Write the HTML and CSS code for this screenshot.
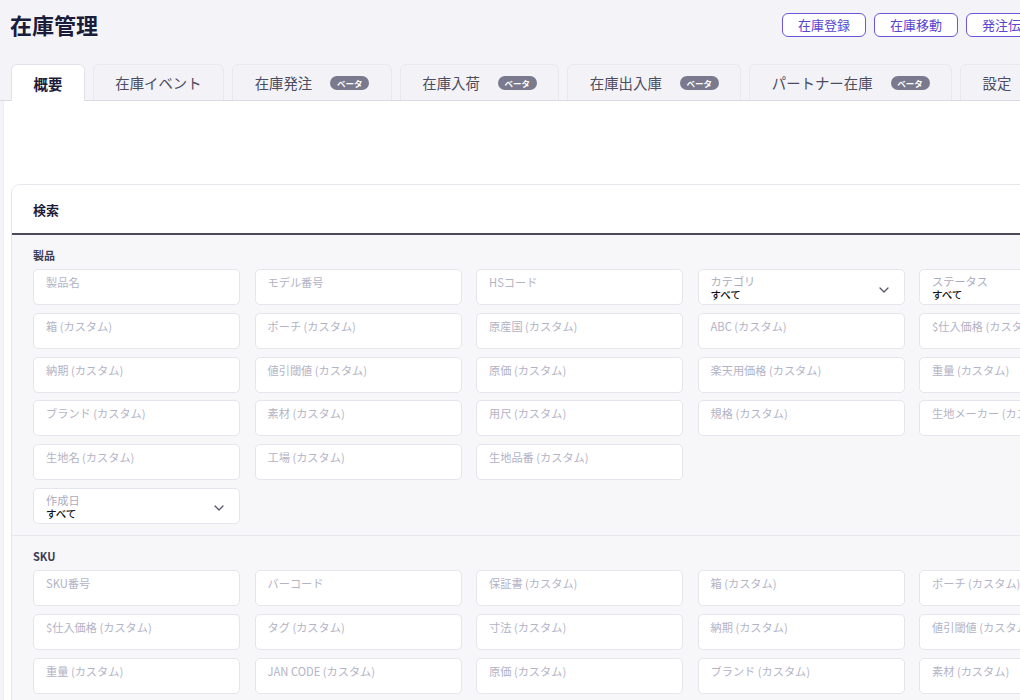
FILE: index.html
```html
<!DOCTYPE html>
<html lang="ja">
<head>
<meta charset="utf-8">
<title>在庫管理</title>
<link rel="stylesheet" href="styles.css">
</head>
<body>
<div class="app">
  <header class="topbar">
    <h1 class="title">在庫管理</h1>
    <div class="actions">
      <button class="btn">在庫登録</button>
      <button class="btn">在庫移動</button>
      <button class="btn">発注伝票</button>
    </div>
  </header>

  <nav class="tabs">
    <div class="tab active">概要</div>
    <div class="tab">在庫イベント</div>
    <div class="tab">在庫発注<span class="badge">ベータ</span></div>
    <div class="tab">在庫入荷<span class="badge">ベータ</span></div>
    <div class="tab">在庫出入庫<span class="badge">ベータ</span></div>
    <div class="tab">パートナー在庫<span class="badge">ベータ</span></div>
    <div class="tab">設定</div>
  </nav>

  <main class="content">
    <section class="card">
      <div class="card-head">検索</div>
      <div class="card-body">
        <div class="group">
          <div class="group-label">製品</div>
          <div class="grid">
            <div class="field">製品名</div>
            <div class="field">モデル番号</div>
            <div class="field">HSコード</div>
            <div class="field select"><div class="sel-text"><span class="sel-label">カテゴリ</span><span class="sel-value">すべて</span></div><svg class="chev" width="10" height="6" viewBox="0 0 10 6"><path d="M1 1l4 4 4-4" fill="none" stroke="#55556a" stroke-width="1.3" stroke-linecap="round" stroke-linejoin="round"/></svg></div>
            <div class="field select"><div class="sel-text"><span class="sel-label">ステータス</span><span class="sel-value">すべて</span></div><svg class="chev" width="10" height="6" viewBox="0 0 10 6"><path d="M1 1l4 4 4-4" fill="none" stroke="#55556a" stroke-width="1.3" stroke-linecap="round" stroke-linejoin="round"/></svg></div>

            <div class="field">箱 (カスタム)</div>
            <div class="field">ポーチ (カスタム)</div>
            <div class="field">原産国 (カスタム)</div>
            <div class="field">ABC (カスタム)</div>
            <div class="field">$仕入価格 (カスタム)</div>

            <div class="field">納期 (カスタム)</div>
            <div class="field">値引閾値 (カスタム)</div>
            <div class="field">原価 (カスタム)</div>
            <div class="field">楽天用価格 (カスタム)</div>
            <div class="field">重量 (カスタム)</div>

            <div class="field">ブランド (カスタム)</div>
            <div class="field">素材 (カスタム)</div>
            <div class="field">用尺 (カスタム)</div>
            <div class="field">規格 (カスタム)</div>
            <div class="field">生地メーカー (カスタム)</div>

            <div class="field">生地名 (カスタム)</div>
            <div class="field">工場 (カスタム)</div>
            <div class="field">生地品番 (カスタム)</div>
          </div>
          <div class="grid dates">
            <div class="field select"><div class="sel-text"><span class="sel-label">作成日</span><span class="sel-value">すべて</span></div><svg class="chev" width="10" height="6" viewBox="0 0 10 6"><path d="M1 1l4 4 4-4" fill="none" stroke="#55556a" stroke-width="1.3" stroke-linecap="round" stroke-linejoin="round"/></svg></div>
          </div>
        </div>

        <div class="group">
          <div class="group-label">SKU</div>
          <div class="grid">
            <div class="field">SKU番号</div>
            <div class="field">バーコード</div>
            <div class="field">保証書 (カスタム)</div>
            <div class="field">箱 (カスタム)</div>
            <div class="field">ポーチ (カスタム)</div>

            <div class="field">$仕入価格 (カスタム)</div>
            <div class="field">タグ (カスタム)</div>
            <div class="field">寸法 (カスタム)</div>
            <div class="field">納期 (カスタム)</div>
            <div class="field">値引閾値 (カスタム)</div>

            <div class="field">重量 (カスタム)</div>
            <div class="field">JAN CODE (カスタム)</div>
            <div class="field">原価 (カスタム)</div>
            <div class="field">ブランド (カスタム)</div>
            <div class="field">素材 (カスタム)</div>
          </div>
        </div>
      </div>
    </section>
  </main>
</div>
</body>
</html>
```

FILE: styles.css
```css
* { box-sizing: border-box; }

html, body {
  margin: 0;
  padding: 0;
  overflow: hidden;
  background: #f4f4f8;
}

body {
  font-family: "Noto Sans CJK JP", "Noto Sans", sans-serif;
  color: #1c1c3a;
}

.app {
  width: 1062px;
}

.topbar {
  height: 64px;
  display: flex;
  justify-content: space-between;
  align-items: flex-start;
  padding: 0 12px 0 10px;
}

.title {
  margin: 9px 0 0;
  font-size: 22px;
  font-weight: 700;
  line-height: 30px;
  color: #1b1b3a;
}

.actions {
  display: flex;
  gap: 8px;
  margin-top: 13px;
}

.btn {
  height: 24px;
  width: 84px;
  padding: 0;
  border: 1px solid #6a56d8;
  border-radius: 6px;
  background: #ffffff;
  color: #5a44d0;
  font-family: inherit;
  font-size: 13px;
  line-height: 22px;
}

.tabs {
  display: flex;
  gap: 8px;
  padding-left: 11px;
  border-bottom: 1px solid #dadae2;
  height: 37px;
}

.tab {
  height: 36px;
  display: flex;
  align-items: center;
  gap: 18px;
  padding: 0 21.5px;
  border: 1px solid #e8e8ee;
  border-bottom: none;
  border-radius: 6px 6px 0 0;
  background: #f3f3f7;
  font-size: 14.4px;
  color: #4c4c62;
  white-space: nowrap;
}

.tab.active {
  background: #ffffff;
  font-weight: 700;
  color: #1b1b3a;
  height: 37px;
  border-color: #e2e2ea;
}

.badge {
  display: inline-block;
  width: 39px;
  height: 14px;
  line-height: 14px;
  border-radius: 7px;
  background: #7a7a8e;
  color: #ffffff;
  font-size: 8.5px;
  text-align: center;
  font-weight: 700;
}

.content {
  background: #ffffff;
  margin-left: 3px;
  padding: 83px 0 0 7px;
  border-left: 1px solid #ececf1;
  height: 600px;
}

.card {
  border: 1px solid #e6e6ec;
  border-right: none;
  border-radius: 9px 0 0 0;
  background: #f7f7fa;
  overflow: hidden;
}

.card-head {
  height: 50px;
  background: #ffffff;
  padding: 0 21px;
  display: flex;
  align-items: center;
  font-size: 13px;
  font-weight: 700;
  color: #1b1b3a;
  border-bottom: 2px solid #4a4a5c;
}

.card-body {
  padding: 0;
}

.group {
  padding: 13px 0 11px 21px;
  border-bottom: 1px solid #e7e7ee;
}

.group-label {
  font-size: 11px;
  font-weight: 700;
  color: #3c3c56;
  line-height: 14px;
  margin-bottom: 7px;
}

.grid {
  display: grid;
  grid-template-columns: repeat(5, 207px);
  column-gap: 14.5px;
  row-gap: 7.8px;
}

.grid.dates {
  margin-top: 7.8px;
}

.field {
  height: 36px;
  background: #ffffff;
  border: 1px solid #e5e5ed;
  border-radius: 5px;
  padding: 4px 12px 0;
  font-size: 11.2px;
  line-height: 16px;
  color: #b3b3c6;
  white-space: nowrap;
  overflow: hidden;
}

.field.select {
  display: flex;
  align-items: center;
  justify-content: space-between;
  padding: 4px 15px 0 12px;
}

.sel-text {
  display: flex;
  flex-direction: column;
  align-self: flex-start;
}

.sel-label {
  line-height: 14px;
  color: #ababbe;
}

.sel-value {
  line-height: 13px;
  font-size: 10.5px;
  color: #111122;
  font-weight: 500;
}

.chev {
  flex: none;
  margin-top: 1px;
}
```
